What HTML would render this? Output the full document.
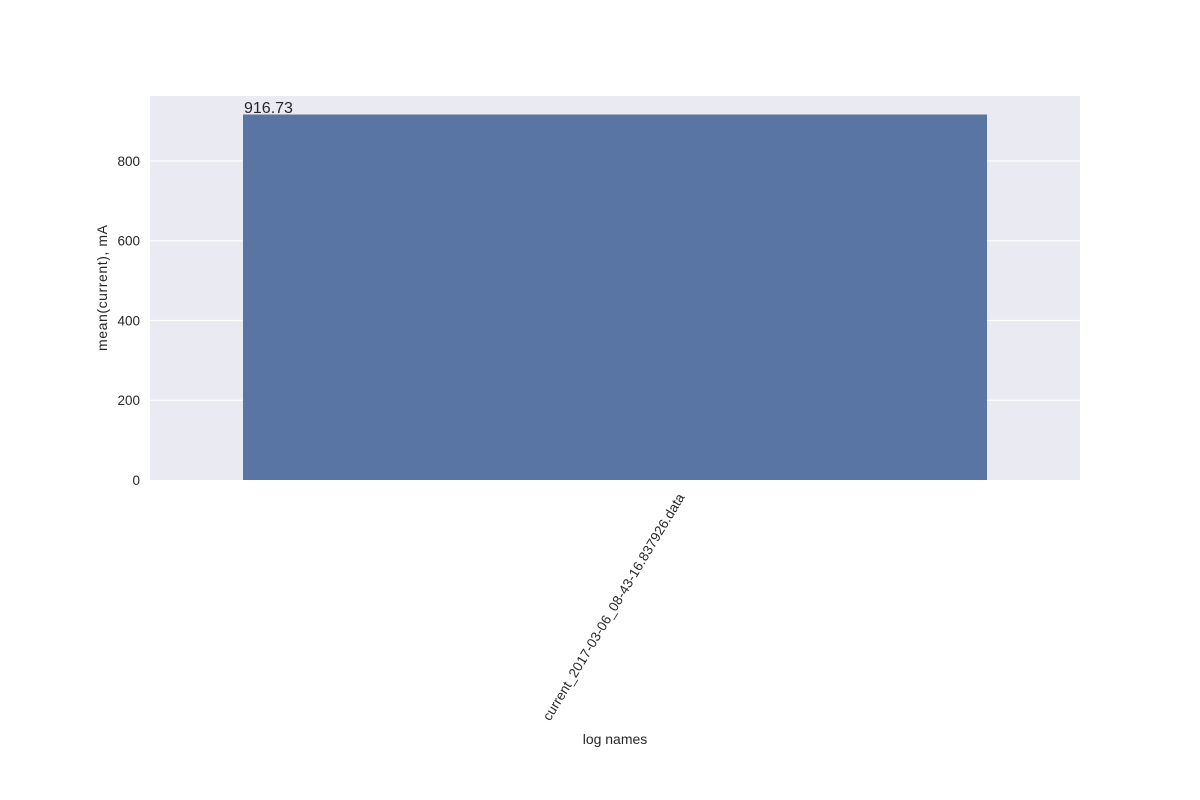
<!DOCTYPE html>
<html><head><style>html,body{margin:0;padding:0;background:#fff;}svg{display:block}</style></head>
<body>
<svg width="1200" height="800" xmlns="http://www.w3.org/2000/svg" font-family="Liberation Sans, Arial, sans-serif" fill="#262626">
<rect x="150" y="96" width="930" height="384" fill="#eaeaf2"/>
<g stroke="#fff" stroke-width="1.2">
<line x1="150" y1="400.3" x2="1080" y2="400.3"/>
<line x1="150" y1="320.5" x2="1080" y2="320.5"/>
<line x1="150" y1="240.8" x2="1080" y2="240.8"/>
<line x1="150" y1="161" x2="1080" y2="161"/>
</g>
<rect x="243" y="114.5" width="744" height="365.5" fill="#5975a4"/>
<text x="244" y="113" font-size="16">916.73</text>
<g font-size="13.5" text-anchor="end">
<text x="140" y="485">0</text>
<text x="140" y="405">200</text>
<text x="140" y="325.5">400</text>
<text x="140" y="245.5">600</text>
<text x="140" y="166">800</text>
</g>
<text transform="translate(107,351) rotate(-90)" font-size="14" textLength="126">mean(current), mA</text>
<text transform="translate(685,497) rotate(-59)" font-size="13.5" text-anchor="end" textLength="262">current_2017-03-06_08-43-16.837926.data</text>
<text x="615" y="744" font-size="14" text-anchor="middle">log names</text>
</svg>
</body></html>
